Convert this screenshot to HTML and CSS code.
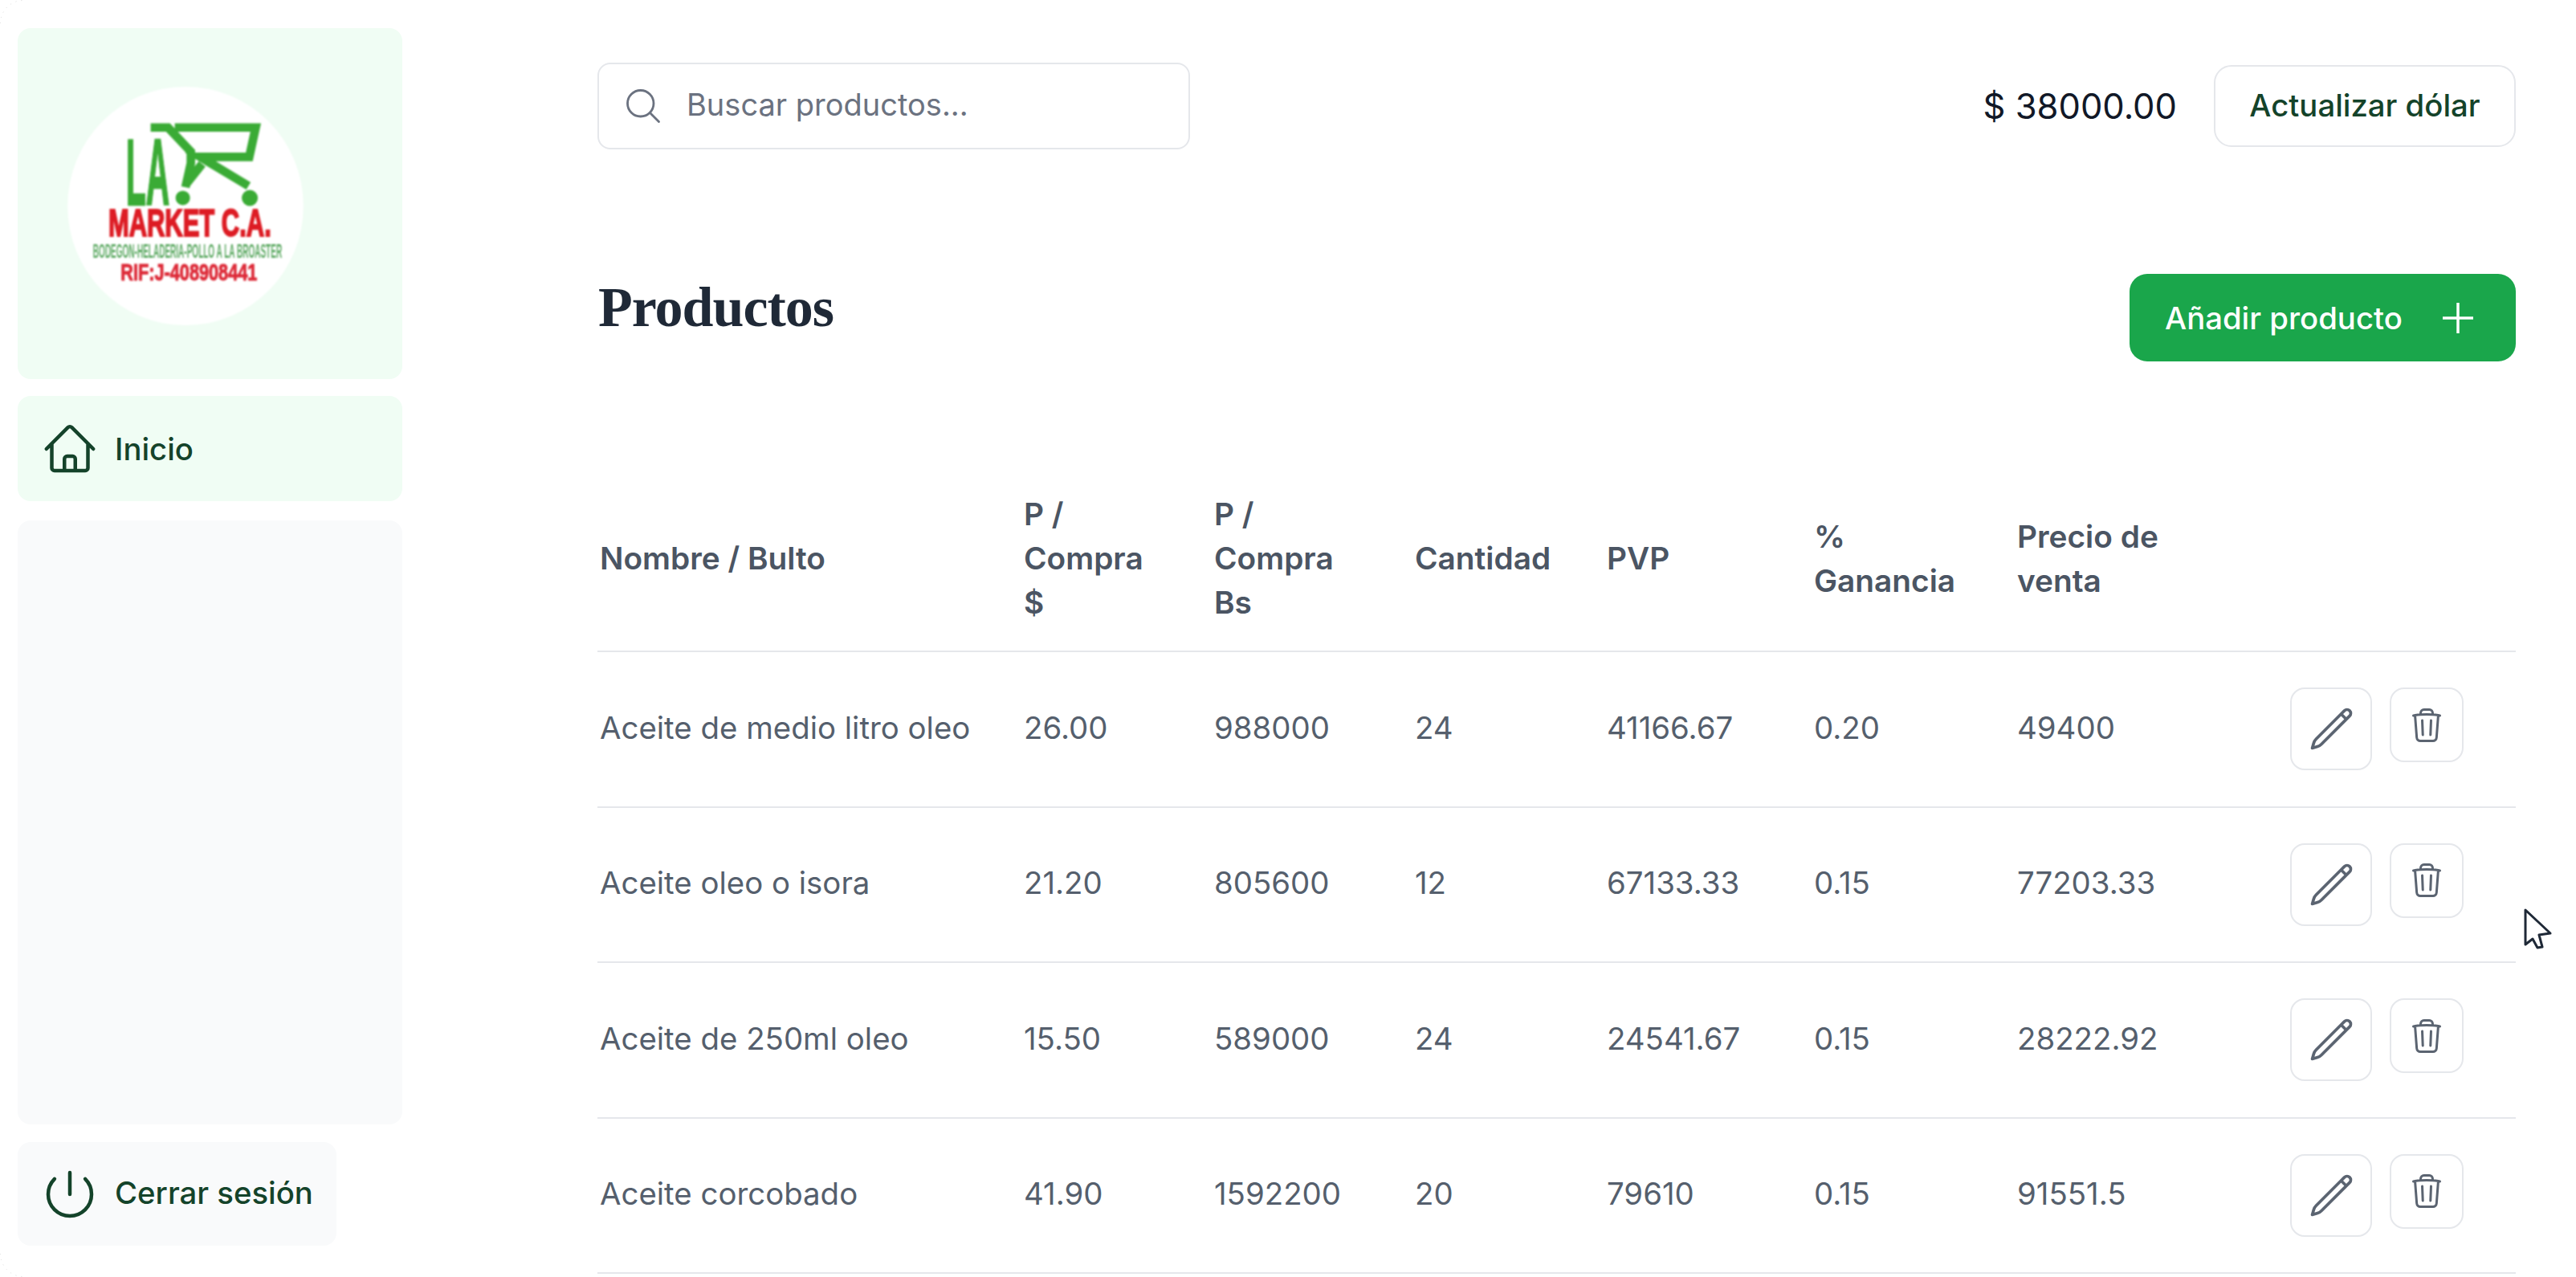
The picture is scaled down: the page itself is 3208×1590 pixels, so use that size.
FILE: index.html
```html
<!DOCTYPE html>
<html lang="es">
<head>
<meta charset="utf-8">
<title>Productos</title>
<link rel="stylesheet" href="styles.css">
</head>
<body>
<div class="app">
  <aside class="sidebar">
    <div class="logo-card">
      <svg class="logo" viewBox="70 50 880 890" aria-label="La Market C.A.">
        <ellipse cx="510" cy="495" rx="440" ry="445" fill="#fff"/>
        <text x="288" y="490" class="lg-la" textLength="162" lengthAdjust="spacingAndGlyphs">LA</text>
        <path class="lg-cart" d="M380 202H445L530 292V335L510 425M470 202H772L748 312H565L745 420M515 410L572 338"/>
        <circle cx="500" cy="465" r="27" fill="#3aab35"/>
        <circle cx="750" cy="465" r="30" fill="#3aab35"/>
        <text x="222" y="608" class="lg-market" textLength="608" lengthAdjust="spacingAndGlyphs">MARKET C.A.</text>
        <text x="165" y="688" class="lg-sub" textLength="705" lengthAdjust="spacingAndGlyphs">BODEGON-HELADERIA-POLLO A LA BROASTER</text>
        <text x="268" y="772" class="lg-rif" textLength="510" lengthAdjust="spacingAndGlyphs">RIF:J-408908441</text>
      </svg>
    </div>
    <a class="nav-item nav-active">
      <svg class="nav-icon" viewBox="0 0 24 24"><path d="m2.250 12 8.954-8.955c.44-.439 1.152-.439 1.591 0L21.750 12M4.500 9.750v10.125c0 .621.504 1.125 1.125 1.125H9.750v-4.875c0-.621.504-1.125 1.125-1.125h2.250c.621 0 1.125.504 1.125 1.125V21h4.125c.621 0 1.125-.504 1.125-1.125V9.750M8.250 21h8.250"/></svg>
      <span>Inicio</span>
    </a>
    <div class="nav-space"></div>
    <a class="nav-item nav-logout">
      <svg class="nav-icon" viewBox="0 0 24 24"><path d="M5.636 5.636a9 9 0 1 0 12.728 0M12 3v9"/></svg>
      <span class="logout-label">Cerrar sesión</span>
    </a>
  </aside>
  <main class="main">
    <header class="topbar">
      <label class="search">
        <svg class="search-icon" viewBox="0 0 24 24"><path d="m21 21-5.197-5.197m0 0A7.500 7.500 0 1 0 5.196 5.196a7.500 7.500 0 0 0 10.607 10.607Z"/></svg>
        <span class="search-text">Buscar productos...</span>
      </label>
      <div class="rate">
        <span class="rate-value">$ 38000.00</span>
        <button class="btn-outline"><span class="btn-label">Actualizar dólar</span></button>
      </div>
    </header>
    <section class="title-row">
      <h1 class="title">Productos</h1>
      <button class="btn-primary"><span>Añadir producto</span>
        <svg class="plus" viewBox="0 0 38 38"><path d="M19 0v38M0 19h38"/></svg>
      </button>
    </section>
    <table class="products">
      <colgroup>
        <col class="c1"><col class="c2"><col class="c3"><col class="c4"><col class="c5"><col class="c6"><col class="c7"><col class="c8">
      </colgroup>
      <thead>
        <tr>
          <th>Nombre / Bulto</th><th>P / Compra $</th><th>P / Compra Bs</th><th>Cantidad</th><th>PVP</th><th>% Ganancia</th><th>Precio de venta</th><th></th>
        </tr>
      </thead>
      <tbody>
        <tr>
          <td>Aceite de medio litro oleo</td><td>26.00</td><td>988000</td><td>24</td><td>41166.67</td><td>0.20</td><td>49400</td>
          <td><div class="actions">
            <button class="icon-btn edit"><svg viewBox="0 0 24 24"><path d="m16.862 4.487 1.687-1.688a1.875 1.875 0 1 1 2.652 2.652L6.832 19.820a4.500 4.500 0 0 1-1.897 1.130l-2.685.8.8-2.685a4.500 4.500 0 0 1 1.130-1.897L16.863 4.487Zm0 0L19.500 7.125"/></svg></button>
            <button class="icon-btn del"><svg viewBox="0 0 24 24"><path d="m14.740 9-.346 9m-4.788 0L9.260 9m9.968-3.210c.342.052.682.107 1.022.166m-1.022-.165L18.160 19.673a2.250 2.250 0 0 1-2.244 2.077H8.084a2.250 2.250 0 0 1-2.244-2.077L4.772 5.790m14.456 0a48.108 48.108 0 0 0-3.478-.397m-12 .562c.34-.059.68-.114 1.022-.165m0 0a48.110 48.110 0 0 1 3.478-.397m7.500 0v-.916c0-1.180-.91-2.164-2.090-2.201a51.964 51.964 0 0 0-3.320 0c-1.180.037-2.090 1.022-2.090 2.201v.916m7.500 0a48.667 48.667 0 0 0-7.500 0"/></svg></button>
          </div></td>
        </tr>
        <tr>
          <td>Aceite oleo o isora</td><td>21.20</td><td>805600</td><td>12</td><td>67133.33</td><td>0.15</td><td>77203.33</td>
          <td><div class="actions">
            <button class="icon-btn edit"><svg viewBox="0 0 24 24"><path d="m16.862 4.487 1.687-1.688a1.875 1.875 0 1 1 2.652 2.652L6.832 19.820a4.500 4.500 0 0 1-1.897 1.130l-2.685.8.8-2.685a4.500 4.500 0 0 1 1.130-1.897L16.863 4.487Zm0 0L19.500 7.125"/></svg></button>
            <button class="icon-btn del"><svg viewBox="0 0 24 24"><path d="m14.740 9-.346 9m-4.788 0L9.260 9m9.968-3.210c.342.052.682.107 1.022.166m-1.022-.165L18.160 19.673a2.250 2.250 0 0 1-2.244 2.077H8.084a2.250 2.250 0 0 1-2.244-2.077L4.772 5.790m14.456 0a48.108 48.108 0 0 0-3.478-.397m-12 .562c.34-.059.68-.114 1.022-.165m0 0a48.110 48.110 0 0 1 3.478-.397m7.500 0v-.916c0-1.180-.91-2.164-2.090-2.201a51.964 51.964 0 0 0-3.320 0c-1.180.037-2.090 1.022-2.090 2.201v.916m7.500 0a48.667 48.667 0 0 0-7.500 0"/></svg></button>
          </div></td>
        </tr>
        <tr>
          <td>Aceite de 250ml oleo</td><td>15.50</td><td>589000</td><td>24</td><td>24541.67</td><td>0.15</td><td>28222.92</td>
          <td><div class="actions">
            <button class="icon-btn edit"><svg viewBox="0 0 24 24"><path d="m16.862 4.487 1.687-1.688a1.875 1.875 0 1 1 2.652 2.652L6.832 19.820a4.500 4.500 0 0 1-1.897 1.130l-2.685.8.8-2.685a4.500 4.500 0 0 1 1.130-1.897L16.863 4.487Zm0 0L19.500 7.125"/></svg></button>
            <button class="icon-btn del"><svg viewBox="0 0 24 24"><path d="m14.740 9-.346 9m-4.788 0L9.260 9m9.968-3.210c.342.052.682.107 1.022.166m-1.022-.165L18.160 19.673a2.250 2.250 0 0 1-2.244 2.077H8.084a2.250 2.250 0 0 1-2.244-2.077L4.772 5.790m14.456 0a48.108 48.108 0 0 0-3.478-.397m-12 .562c.34-.059.68-.114 1.022-.165m0 0a48.110 48.110 0 0 1 3.478-.397m7.500 0v-.916c0-1.180-.91-2.164-2.090-2.201a51.964 51.964 0 0 0-3.320 0c-1.180.037-2.090 1.022-2.090 2.201v.916m7.500 0a48.667 48.667 0 0 0-7.500 0"/></svg></button>
          </div></td>
        </tr>
        <tr>
          <td>Aceite corcobado</td><td>41.90</td><td>1592200</td><td>20</td><td>79610</td><td>0.15</td><td>91551.5</td>
          <td><div class="actions">
            <button class="icon-btn edit"><svg viewBox="0 0 24 24"><path d="m16.862 4.487 1.687-1.688a1.875 1.875 0 1 1 2.652 2.652L6.832 19.820a4.500 4.500 0 0 1-1.897 1.130l-2.685.8.8-2.685a4.500 4.500 0 0 1 1.130-1.897L16.863 4.487Zm0 0L19.500 7.125"/></svg></button>
            <button class="icon-btn del"><svg viewBox="0 0 24 24"><path d="m14.740 9-.346 9m-4.788 0L9.260 9m9.968-3.210c.342.052.682.107 1.022.166m-1.022-.165L18.160 19.673a2.250 2.250 0 0 1-2.244 2.077H8.084a2.250 2.250 0 0 1-2.244-2.077L4.772 5.790m14.456 0a48.108 48.108 0 0 0-3.478-.397m-12 .562c.34-.059.68-.114 1.022-.165m0 0a48.110 48.110 0 0 1 3.478-.397m7.500 0v-.916c0-1.180-.91-2.164-2.090-2.201a51.964 51.964 0 0 0-3.320 0c-1.180.037-2.090 1.022-2.090 2.201v.916m7.500 0a48.667 48.667 0 0 0-7.500 0"/></svg></button>
          </div></td>
        </tr>
      </tbody>
    </table>
  </main>
</div>
<svg class="corner corner-top" viewBox="0 0 30 30"><path d="M.5 29A28.500 28.500 0 0 1 29 .5"/></svg>
<svg class="corner corner-bottom" viewBox="0 0 30 30"><path d="M.5 1A28.500 28.500 0 0 0 29 29.500"/></svg>
<svg class="cursor" viewBox="-2 -2 35 52"><path d="M0 0V43L9 36 15 47 21 46 17 31 31 29Z"/></svg>
</body>
</html>
```
FILE: styles.css
```css
* { box-sizing: border-box; }
html, body { margin: 0; height: 100%; overflow: hidden; background: #fff; }
body { font-family: Inter, "Liberation Sans", sans-serif; color: #111827; }

.app { display: flex; height: 1590px; }

.sidebar {
  width: 479px;
  margin: 35px 0 39px 22px;
  display: flex;
  flex-direction: column;
  flex: none;
}
.logo-card {
  height: 437px;
  background: #f0fdf4;
  border-radius: 16px;
  padding: 73px 0 0 62px;
}
.logo { display: block; width: 294px; height: 297px; overflow: visible; filter: blur(1px); }
.lg-la { font: 700 350px "Liberation Sans", sans-serif; fill: #3aab35; stroke: #3aab35; stroke-width: 8; }
.lg-cart { fill: none; stroke: #3aab35; stroke-width: 32; stroke-linejoin: miter; }
.lg-market { font: 700 146px "Liberation Sans", sans-serif; fill: #dd1c24; stroke: #dd1c24; stroke-width: 6; }
.lg-sub { font: 700 72px "Liberation Sans", sans-serif; fill: #5aa860; }
.lg-rif { font: 700 88px "Liberation Sans", sans-serif; fill: #dd2a38; stroke: #dd2a38; stroke-width: 3; }

.nav-item {
  display: flex;
  align-items: center;
  gap: 20px;
  height: 131px;
  padding-left: 29px;
  border-radius: 16px;
  font-size: 38.300px;
  font-weight: 500;
  color: #14432a;
}
.nav-active { margin-top: 21px; background: #f0fdf4; }
.nav-space { flex: 1; margin: 24px 0 22px; background: #f9fafb; border-radius: 16px; }
.nav-logout { width: 397px; height: 129px; background: #f9fafb; }
.logout-label { padding-bottom: 3px; }
.nav-icon { width: 72px; height: 72px; flex: none; fill: none; stroke: #14432a; stroke-width: 1.500; stroke-linecap: round; stroke-linejoin: round; }

.main { flex: 1; min-width: 0; padding: 78px 75px 0 243px; }

.topbar { display: flex; justify-content: space-between; align-items: center; height: 108px; }
.search {
  width: 738px;
  height: 108px;
  border: 2px solid #e5e7eb;
  border-radius: 16px;
  display: flex;
  align-items: center;
  gap: 28px;
  padding-left: 29px;
}
.search-icon { width: 52px; height: 52px; fill: none; stroke: #6b7280; stroke-width: 1.300; stroke-linecap: round; stroke-linejoin: round; }
.search-text { font-size: 38px; color: #6b7280; padding-bottom: 4px; }

.rate { display: flex; align-items: center; gap: 46px; }
.rate-value { font-size: 43.500px; }
button { font-family: inherit; cursor: pointer; }
.btn-outline {
  width: 376px;
  height: 102px;
  background: #fff;
  border: 2px solid #e5e7eb;
  border-radius: 22px;
  font-size: 38.300px;
  font-weight: 500;
  color: #14432a;
}
.btn-label { display: block; padding-bottom: 3px; }

.title-row { display: flex; justify-content: space-between; align-items: flex-start; margin-top: 155px; }
.title {
  margin: 0 0 0 1px;
  font: 700 70px/1.200 "Liberation Serif", serif;
  letter-spacing: -1px;
  color: #1f2937;
}
.btn-primary {
  width: 481px;
  height: 109px;
  background: #1aa64b;
  border: 0;
  border-radius: 22px;
  color: #fff;
  font-size: 38.300px;
  font-weight: 500;
  display: flex;
  align-items: center;
  padding-left: 44px;
  gap: 50px;
}
.plus { width: 38px; height: 38px; fill: none; stroke: #fff; stroke-width: 3.500; }

.products { width: 100%; table-layout: fixed; border-collapse: collapse; margin-top: 132px; }
.c1 { width: 528px; } .c2 { width: 237px; } .c3 { width: 250px; } .c4 { width: 239px; }
.c5 { width: 258px; } .c6 { width: 253px; } .c7 { width: 300px; } .c8 { width: 324px; }
.products th, .products td { text-align: left; border-bottom: 2px solid #e5e7eb; }
.products th { padding: 0 65px 3px 3px; font-size: 38.800px; font-weight: 600; line-height: 55px; color: #4b5563; height: 229px; }
.products td { padding: 0 3px 4px; font-size: 38.400px; color: #555f6d; height: 193.500px; }

.actions { display: flex; align-items: flex-start; justify-content: flex-end; gap: 22px; padding-right: 62px; margin-top: 4px; }
.icon-btn {
  display: flex;
  align-items: center;
  justify-content: center;
  padding: 0;
  background: #fff;
  border: 2px solid #e5e7eb;
  border-radius: 18px;
}
.icon-btn svg { fill: none; stroke: #5b6471; stroke-width: 1.500; stroke-linejoin: round; stroke-linecap: round; }
.edit { width: 102px; height: 103px; }
.edit svg { width: 59px; height: 59px; }
.del { width: 92px; height: 93px; }
.del svg { width: 48px; height: 48px; }

.corner { position: fixed; left: 0; width: 30px; height: 30px; fill: none; stroke: #d8d8d8; stroke-width: 1; stroke-dasharray: 1 6; }
.corner-top { top: 0; }
.corner-bottom { bottom: 0; }

.cursor { position: fixed; left: 3143px; top: 1131px; width: 35px; height: 52px; fill: #fff; stroke: #1f2937; stroke-width: 3; stroke-linejoin: round; }
```
